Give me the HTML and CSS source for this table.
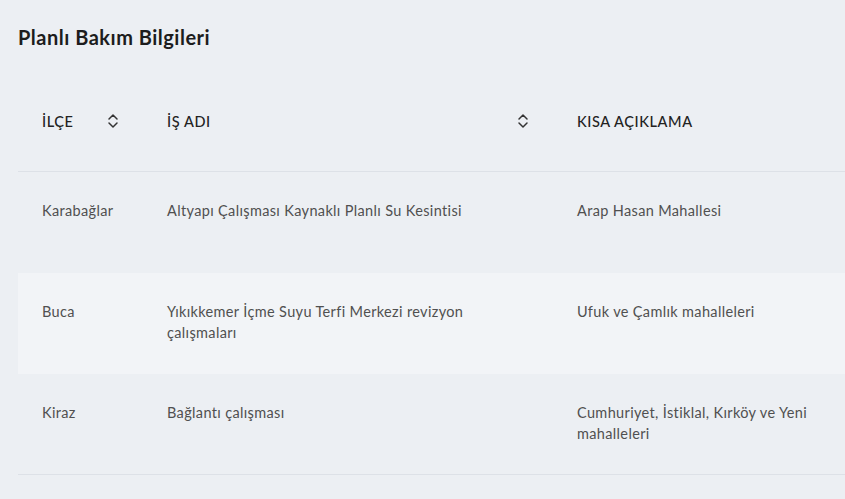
FILE: index.html
```html
<!DOCTYPE html>
<html>
<head>
    <title>Planlı Bakım Bilgileri</title>
    <meta http-equiv="content-type" content="text/html; charset=UTF-8"/>
    <link rel="stylesheet" href="styles.css">
</head>
<body>
<div class="page">
    <h2 class="page-title">Planlı Bakım Bilgileri</h2>
    <table class="maintenance">
        <thead>
            <tr>
                <th class="col-district">
                    <span class="th-inner">İLÇE
                        <svg class="sort" viewBox="0 0 12 16" width="12" height="16"><path d="M2 6 L6 2 L10 6 M2 10 L6 14 L10 10"/></svg>
                    </span>
                </th>
                <th class="col-job">
                    <span class="th-inner">İŞ ADI
                        <svg class="sort" viewBox="0 0 12 16" width="12" height="16"><path d="M2 6 L6 2 L10 6 M2 10 L6 14 L10 10"/></svg>
                    </span>
                </th>
                <th class="col-desc">KISA AÇIKLAMA</th>
            </tr>
        </thead>
        <tbody>
            <tr>
                <td>Karabağlar</td>
                <td>Altyapı Çalışması Kaynaklı Planlı Su Kesintisi</td>
                <td>Arap Hasan Mahallesi</td>
            </tr>
            <tr class="striped">
                <td>Buca</td>
                <td>Yıkıkkemer İçme Suyu Terfi Merkezi revizyon çalışmaları</td>
                <td>Ufuk ve Çamlık mahalleleri</td>
            </tr>
            <tr class="last">
                <td>Kiraz</td>
                <td>Bağlantı çalışması</td>
                <td>Cumhuriyet, İstiklal, Kırköy ve Yeni mahalleleri</td>
            </tr>
        </tbody>
    </table>
</div>
</body>
</html>
```

FILE: styles.css
```css
html {
    height: 100%;
}

body {
    margin: 0;
    height: 100%;
    overflow: hidden;
    background-color: #eceff3;
    color: #3b3b3b;
    font-family: "Lato", "Noto Sans", sans-serif;
}

.page {
    padding: 23px 0 0 18px;
}

.page-title {
    margin: 0 0 20px;
    font-size: 20px;
    line-height: 28px;
    font-weight: 700;
    letter-spacing: 0.5px;
    color: #1d1d1d;
}

.maintenance {
    width: 835px;
    border-collapse: collapse;
    table-layout: fixed;
}

.maintenance th,
.maintenance td {
    padding: 0 24px;
    text-align: left;
    vertical-align: middle;
}

.maintenance th {
    height: 100px;
    font-size: 14.5px;
    font-weight: 500;
    letter-spacing: 0.6px;
    color: #222;
    border-bottom: 1px solid #dde1e7;
}

.col-district {
    width: 77px;
}

.col-job {
    width: 362px;
}

.th-inner {
    display: flex;
    justify-content: space-between;
    align-items: center;
}

.sort {
    fill: none;
    stroke: #333;
    stroke-width: 1.5;
    stroke-linecap: round;
    stroke-linejoin: round;
}

.maintenance td {
    height: 101px;
    font-size: 14.5px;
    line-height: 21px;
    letter-spacing: 0.35px;
    color: #505050;
    vertical-align: top;
    padding-top: 28px;
    box-sizing: border-box;
}

.maintenance .striped td {
    background-color: #f2f4f7;
}

.maintenance .last td {
    border-bottom: 1px solid #dde1e7;
}
```
